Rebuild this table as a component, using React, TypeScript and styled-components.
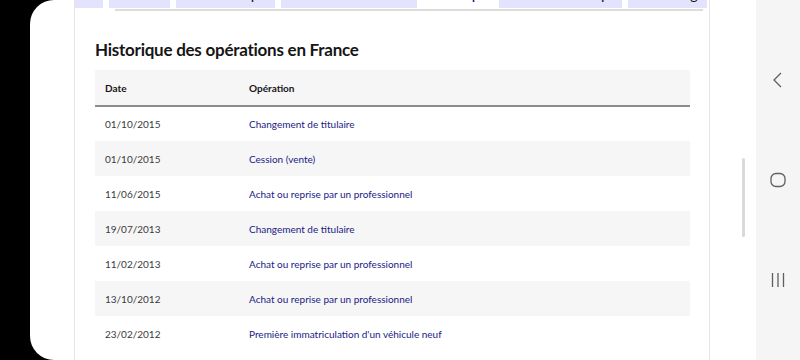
import React from "react";
import styled, { createGlobalStyle } from "styled-components";

const Global = createGlobalStyle`
  html, body { margin: 0; padding: 0; background: #000; overflow: hidden; }
  body { width: 800px; height: 360px; font-family: Lato, "Noto Sans", sans-serif; }
  * { box-sizing: border-box; }
`;

const Frame = styled.div`
  display: flex;
  width: 800px;
  height: 360px;
  padding-left: 30px;
  background: #000;
`;

const Screen = styled.div`
  flex: 1;
  display: flex;
  height: 360px;
  background: #fff;
  border-radius: 24px 0 0 24px;
  overflow: hidden;
`;

const Viewport = styled.div`
  position: relative;
  flex: 1;
  overflow: hidden;
`;

const Page = styled.div`
  padding-left: 44px;
  margin-top: -32px;
`;

const Card = styled.section`
  width: 636px;
  min-height: 420px;
  border-left: 1px solid #e6e6e6;
  border-right: 1px solid #e6e6e6;
  background: #fff;
`;

const TabList = styled.div`
  display: flex;
  gap: 6px;
  height: 40px;
`;

const Tab = styled.div<{ $w: number; $active?: boolean }>`
  flex: 0 0 ${(p) => p.$w}px;
  display: flex;
  align-items: flex-end;
  justify-content: center;
  padding-bottom: 5px;
  overflow: hidden;
  white-space: nowrap;
  background: ${(p) => (p.$active ? "#fff" : "#e3e3fd")};
  color: ${(p) => (p.$active ? "#000091" : "#161616")};
  font-size: 14px;
  line-height: 16px;
  font-weight: 500;
`;

const TabRule = styled.div`
  height: 2px;
  margin: 1px 6px 0 40px;
  background: #dcdcdc;
`;

const Panel = styled.div`
  padding: 0 19px 0 20px;
`;

const Title = styled.h2`
  margin: 27px 0 8px;
  font-size: 17px;
  line-height: 24px;
  letter-spacing: -0.25px;
  font-weight: 700;
  color: #161616;
`;

const Table = styled.table`
  width: 595px;
  border-collapse: collapse;
`;

const Th = styled.th<{ $w?: number }>`
  height: 36px;
  padding: 0 10px;
  text-align: left;
  font-size: 10px;
  font-weight: 700;
  color: #161616;
  background: #f6f6f6;
  border-bottom: 2px solid #8c8c8c;
  width: ${(p) => (p.$w ? `${p.$w}px` : "auto")};
`;

const Tr = styled.tr`
  height: 35px;
  &:nth-child(even) { background: #f6f6f6; }
`;

const Td = styled.td<{ $link?: boolean }>`
  padding: 0 10px;
  font-size: 10px;
  color: ${(p) => (p.$link ? "#1a1a86" : "#3a3a3a")};
`;

const ScrollThumb = styled.div`
  position: absolute;
  left: 712px;
  top: 158px;
  width: 3px;
  height: 79px;
  border-radius: 2px;
  background: #d9d9d9;
`;

const NavBar = styled.nav`
  flex: 0 0 44px;
  display: flex;
  flex-direction: column;
  align-items: center;
  gap: 84px;
  padding-top: 72px;
  background: #f5f5f5;
`;

const NavIcon = styled.svg`
  width: 16px;
  height: 16px;
  stroke: #5f5f5f;
  stroke-width: 1.3;
  fill: none;
`;

const tabs = [
  { label: "Synthèse", w: 28 },
  { label: "Véhicule", w: 61 },
  { label: "Caractéristiques", w: 99 },
  { label: "Situation administrative", w: 136 },
  { label: "Historique", w: 70, active: true },
  { label: "Contrôles techniques", w: 123 },
  { label: "Kilométrage", w: 79 },
];

const rows = [
  ["01/10/2015", "Changement de titulaire"],
  ["01/10/2015", "Cession (vente)"],
  ["11/06/2015", "Achat ou reprise par un professionnel"],
  ["19/07/2013", "Changement de titulaire"],
  ["11/02/2013", "Achat ou reprise par un professionnel"],
  ["13/10/2012", "Achat ou reprise par un professionnel"],
  ["23/02/2012", "Première immatriculation d'un véhicule neuf"],
];

export default function App() {
  return (
    <>
      <Global />
      <Frame>
        <Screen>
          <Viewport>
            <Page>
              <Card>
                <TabList>
                  {tabs.map((t) => (
                    <Tab key={t.label} $w={t.w} $active={t.active}>
                      {t.label}
                    </Tab>
                  ))}
                </TabList>
                <TabRule />
                <Panel>
                  <Title>Historique des opérations en France</Title>
                  <Table>
                    <thead>
                      <tr>
                        <Th $w={144}>Date</Th>
                        <Th>Opération</Th>
                      </tr>
                    </thead>
                    <tbody>
                      {rows.map(([d, o], i) => (
                        <Tr key={i}>
                          <Td>{d}</Td>
                          <Td $link>{o}</Td>
                        </Tr>
                      ))}
                    </tbody>
                  </Table>
                </Panel>
              </Card>
            </Page>
            <ScrollThumb />
          </Viewport>
          <NavBar>
            <NavIcon viewBox="0 0 16 16">
              <polyline points="11,1 4,8 11,15" />
            </NavIcon>
            <NavIcon viewBox="0 0 16 16">
              <rect x="1" y="1.5" width="14" height="13" rx="5" />
            </NavIcon>
            <NavIcon viewBox="0 0 16 16">
              <line x1="2.5" y1="1" x2="2.5" y2="15" />
              <line x1="8" y1="1" x2="8" y2="15" />
              <line x1="13.5" y1="1" x2="13.5" y2="15" />
            </NavIcon>
          </NavBar>
        </Screen>
      </Frame>
    </>
  );
}
